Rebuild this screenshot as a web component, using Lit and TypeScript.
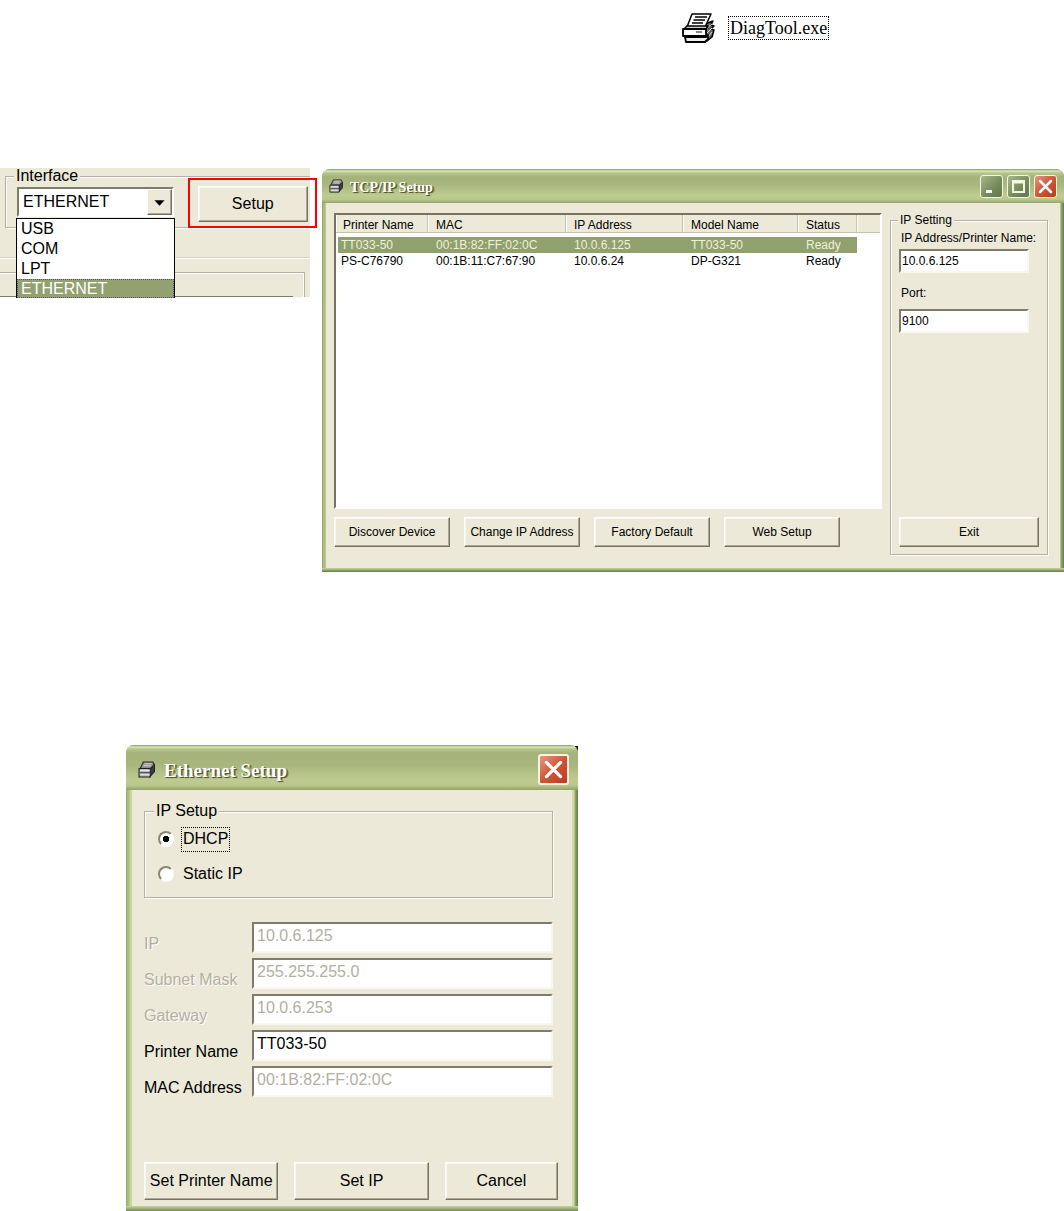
import { LitElement, html, css, svg } from "lit";
import { customElement, property, state } from "lit/decorators.js";
import { classMap } from "lit/directives/class-map.js";

const controls = css`
  * {
    box-sizing: border-box;
  }
  button.classic {
    margin: 0;
    padding: 0;
    border: 1px solid;
    border-color: #fff #77735f #77735f #fff;
    box-shadow: inset -1px -1px 0 #aca899, inset 1px 1px 0 #f8f7f0;
    background: #ece9d8;
    color: #000;
    font: inherit;
    white-space: nowrap;
    overflow: hidden;
  }
  .field {
    display: block;
    width: 100%;
    margin: 0;
    border: 2px solid;
    border-color: #807c69 #f8f7f0 #f8f7f0 #807c69;
    border-radius: 0;
    background: #fff;
    color: #000;
    font: inherit;
    outline: none;
  }
  fieldset {
    margin: 0;
    min-width: 0;
    border: 1px solid #b5b2a2;
    box-shadow: 1px 1px 0 #fff, inset 1px 1px 0 #fff;
  }
  legend {
    padding: 0 2px;
    background: #ece9d8;
  }
`;

const smallPrinter = svg`
  <path d="M5 1 H14 L15.500 4 L12 7 H2 Z" fill="#8c8c8c" stroke="#2b2b2b" />
  <path d="M11 8 L15.500 3.500 V10 L11 15 Z" fill="#3c3c3c" stroke="#222" />
  <path d="M1 7 H11.500 V15 H1 Z" fill="#b4b4b4" stroke="#222" />
  <path d="M2 9 H11 M2 13 H11" stroke="#eee" />
  <path d="M2 11 H11" stroke="#444" />
  <path d="M6 2.500 H13 M5 4.500 H12" stroke="#d8d8d8" />
`;

@customElement("xp-window")
class XpWindow extends LitElement {
  @property() heading = "";
  @property({ type: Boolean, reflect: true }) large = false;
  @property({ type: Boolean }) sizable = false;

  static styles = [
    controls,
    css`
      :host {
        display: block;
        position: relative;
      }
      :host([large])::before {
        content: "";
        position: absolute;
        top: 1px;
        right: 0;
        width: 3px;
        height: 5px;
        background: #111;
      }
      .frame {
        position: relative;
        border-radius: 8px 8px 0 0;
        overflow: hidden;
        background: linear-gradient(90deg, #8ca266, #b3c387 2px, #a5bb7b 3px, #c9d69d 4px, #c9d69d 50%, #d0dca4 50%, #d0dca4 calc(100% - 4px), #94ab70 calc(100% - 3px), #5f7b4b);
      }
      .title {
        display: flex;
        align-items: center;
        gap: 7px;
        height: 34px;
        padding: 0 7px;
        background: linear-gradient(180deg, #82955c 0, #dfe7b9 2px, #b7c48c 4px, #a5b37b 8px, #a8b77e 45%, #bfcb90 78%, #b9c68c 90%, #90a36b 100%);
      }
      h2 {
        flex: 1;
        margin: 0;
        padding-top: 3px;
        font: bold 14px "Liberation Serif", serif;
        color: #fff;
        text-shadow: 1px 1px 0 #555b32, 2px 1px 1px #6b7345;
        white-space: nowrap;
      }
      .icon {
        width: 14px;
        height: 14px;
        flex: none;
      }
      .tools {
        display: flex;
        gap: 4px;
      }
      .tool {
        display: block;
        width: 23px;
        height: 23px;
        padding: 0;
        border: 1px solid #f4f6e2;
        border-radius: 3px;
        background: linear-gradient(135deg, #a9b78a, #75895a 60%, #62784a);
      }
      .tool svg {
        display: block;
        width: 100%;
        height: 100%;
      }
      .close {
        background: linear-gradient(135deg, #e39a80, #cf5638 50%, #b83c1c);
      }
      .client {
        margin: 0 4px 4px;
        background: #ece9d8;
      }
      .bottom {
        position: absolute;
        left: 0;
        right: 0;
        bottom: 0;
        height: 4px;
        background: linear-gradient(180deg, #c9d69d, #94ab70 50%, #5f7b4b);
      }
      :host([large]) .title {
        height: 45px;
        gap: 9px;
        padding: 4px 9px 0 12px;
      }
      :host([large]) h2 {
        font-size: 19px;
      }
      :host([large]) .icon {
        width: 17px;
        height: 17px;
      }
      :host([large]) .tool {
        width: 31px;
        height: 31px;
        border-width: 2px;
      }
      :host([large]) .client {
        margin: 0 6px 6px;
      }
      :host([large]) .bottom {
        height: 6px;
      }
    `,
  ];

  render() {
    return html`
      <section class="frame" aria-label=${this.heading}>
        <div class="bottom"></div>
        <header class="title">
          <svg class="icon" viewBox="0 0 16 16" aria-hidden="true">${smallPrinter}</svg>
          <h2>${this.heading}</h2>
          <div class="tools">
            ${this.sizable
              ? html`
                  <button class="tool" aria-label="Minimize">
                    <svg viewBox="0 0 21 21"><path d="M5 15.500 H11" stroke="#fff" stroke-width="3" /></svg>
                  </button>
                  <button class="tool" aria-label="Maximize">
                    <svg viewBox="0 0 21 21"><path d="M5 5 H16 V16 H5 Z M5 6.500 H16" stroke="#f4f6e2" stroke-width="2" fill="none" /></svg>
                  </button>
                `
              : null}
            <button class="tool close" aria-label="Close">
              <svg viewBox="0 0 21 21"><path d="M5 5 L16 16 M16 5 L5 16" stroke="#fff" stroke-width="2.500" stroke-linecap="round" /></svg>
            </button>
          </div>
        </header>
        <div class="client"><slot></slot></div>
      </section>
    `;
  }
}

@customElement("interface-picker")
class InterfacePicker extends LitElement {
  @state() private selected = "ETHERNET";
  private options = ["USB", "COM", "LPT", "ETHERNET"];

  static styles = [
    controls,
    css`
      :host {
        display: block;
        font: 16px/20px "Liberation Sans", Arial, sans-serif;
      }
      .panel {
        display: flex;
        flex-direction: column;
        position: relative;
        background: #ece9d8;
      }
      .group {
        display: grid;
        grid-template-columns: minmax(0, 156fr) minmax(0, 122fr);
        gap: 14px;
        margin-left: 5px;
        padding: 3px 0 10px 11px;
        border-right: 0;
      }
      legend {
        margin-left: -3px;
        line-height: 16px;
      }
      .combo {
        position: relative;
      }
      .box {
        display: flex;
        border: 2px solid;
        border-color: #807c69 #fff #fff #807c69;
      }
      select {
        appearance: none;
        flex: 1;
        min-width: 0;
        height: 26px;
        padding: 0 4px;
        border: 0;
        border-radius: 0;
        background: #fff;
        color: #000;
        font: inherit;
      }
      .arrow {
        display: block;
        width: 25px;
        height: 26px;
        border: 1px solid;
        border-color: #fff #77735f #77735f #fff;
        box-shadow: inset -1px -1px 0 #aca899;
        background: #ece9d8;
        pointer-events: none;
      }
      .list {
        position: absolute;
        z-index: 2;
        top: 31px;
        left: -1px;
        right: -1px;
        margin: 0;
        padding: 0;
        list-style: none;
        border: 1px solid #000;
        border-bottom: 0;
        background: #fff;
      }
      .option {
        height: 20px;
        padding: 0 4px;
      }
      .option:last-child {
        height: 19px;
        overflow: hidden;
      }
      .option.active {
        background: #93a070;
        color: #fff;
        outline: 1px dotted #55506b;
        outline-offset: -1px;
      }
      .callout {
        align-self: start;
        margin: -9px -7px -12px 0;
        padding: 6px 7px 4px 8px;
        border: 2px solid #f00;
        position: relative;
      }
      .callout .classic {
        display: block;
        width: 100%;
        height: 36px;
      }
      .rule {
        height: 2px;
        margin-top: 29px;
        background: linear-gradient(#d5d2c2 50%, #fff 50%);
      }
      .below {
        height: 25px;
        margin: 13px 5px 0 0;
        border: 1px solid #b5b2a2;
        border-width: 1px 1px 0 0;
        box-shadow: inset -1px 1px 0 #fff;
        display: flex;
        align-items: flex-end;
        padding-right: 11px;
      }
      .inner {
        flex: 1;
        height: 1px;
        background: #807c69;
      }
    `,
  ];

  render() {
    return html`
      <div class="panel">
        <fieldset class="group">
          <legend>Interface</legend>
          <div class="combo">
            <div class="box">
              <select aria-label="Interface" @change=${(e: Event) => (this.selected = (e.target as HTMLSelectElement).value)}>
                ${this.options.map((o) => html`<option ?selected=${o === this.selected}>${o}</option>`)}
              </select>
              <svg class="arrow" viewBox="0 0 25 26" aria-hidden="true"><path d="M7 11 H18 L12.500 17 Z" /></svg>
            </div>
            <ul class="list" role="listbox" aria-label="Interface">
              ${this.options.map(
                (o) => html`<li
                  role="option"
                  aria-selected=${o === this.selected}
                  class=${classMap({ option: true, active: o === this.selected })}
                  @click=${() => (this.selected = o)}
                >${o}</li>`
              )}
            </ul>
          </div>
          <div class="callout"><button class="classic">Setup</button></div>
        </fieldset>
        <div class="rule"></div>
        <div class="below"><div class="inner"></div></div>
      </div>
    `;
  }
}

@customElement("tcpip-setup")
class TcpipSetup extends LitElement {
  @state() private current = 0;
  private columns = ["Printer Name", "MAC", "IP Address", "Model Name", "Status"];
  private rows = [
    ["TT033-50", "00:1B:82:FF:02:0C", "10.0.6.125", "TT033-50", "Ready"],
    ["PS-C76790", "00:1B:11:C7:67:90", "10.0.6.24", "DP-G321", "Ready"],
  ];
  private actions = ["Discover Device", "Change IP Address", "Factory Default", "Web Setup"];

  static styles = [
    controls,
    css`
      :host {
        display: block;
        font: 12px/14px "Liberation Sans", Arial, sans-serif;
      }
      .body {
        display: grid;
        grid-template-columns: minmax(0, 548fr) minmax(0, 158fr);
        gap: 8px;
        padding: 10px 12px 13px 8px;
      }
      .main {
        display: flex;
        flex-direction: column;
        gap: 8px;
        padding-bottom: 8px;
      }
      .list {
        min-height: 296px;
        border: 2px solid;
        border-color: #77735f #fff #fff #77735f;
        background: #fff;
      }
      table {
        width: 100%;
        table-layout: fixed;
        border-collapse: separate;
        border-spacing: 0;
      }
      th {
        height: 18px;
        padding: 2px 0 0 8px;
        font-weight: normal;
        text-align: left;
        background: #ece9d8;
        border-right: 1px solid #c5c2b0;
        border-bottom: 1px solid #c5c2b0;
        box-shadow: inset 1px 0 0 #fff;
        white-space: nowrap;
      }
      th:first-child {
        padding-left: 7px;
      }
      th:last-child {
        border-right: 0;
      }
      .c1 { width: 92px; }
      .c2 { width: 138px; }
      .c3 { width: 117px; }
      .c4 { width: 115px; }
      .c5 { width: 59px; }
      tbody::before {
        content: "";
        display: block;
        height: 4px;
      }
      td {
        height: 16px;
        padding: 0 0 0 8px;
        white-space: nowrap;
        background-clip: padding-box;
      }
      td:first-child {
        padding-left: 3px;
        border-left: 2px solid transparent;
      }
      .picked td {
        background-color: #91a06f;
        color: #eff2d4;
      }
      .actions {
        display: grid;
        grid-template-columns: repeat(4, minmax(0, 116px));
        gap: 14px;
      }
      .classic {
        height: 30px;
      }
      .side {
        display: flex;
        flex-direction: column;
        padding: 4px 8px 7px;
      }
      legend {
        margin-left: -1px;
      }
      label {
        padding-left: 2px;
        white-space: nowrap;
      }
      .field {
        width: 93%;
        height: 24px;
        margin: 4px 0 13px;
        padding: 0 1px;
      }
      .port {
        margin-top: 9px;
      }
      .side .classic {
        margin-top: auto;
      }
    `,
  ];

  render() {
    return html`
      <xp-window heading="TCP/IP Setup" sizable>
        <div class="body">
          <div class="main">
            <div class="list">
              <table>
                <colgroup>
                  <col class="c1" /><col class="c2" /><col class="c3" /><col class="c4" /><col class="c5" /><col />
                </colgroup>
                <thead>
                  <tr>${this.columns.map((c) => html`<th scope="col">${c}</th>`)}<th></th></tr>
                </thead>
                <tbody>
                  ${this.rows.map(
                    (r, i) => html`<tr class=${classMap({ picked: i === this.current })} @click=${() => (this.current = i)}>
                      ${r.map((v) => html`<td>${v}</td>`)}
                    </tr>`
                  )}
                </tbody>
              </table>
            </div>
            <div class="actions">${this.actions.map((a) => html`<button class="classic">${a}</button>`)}</div>
          </div>
          <fieldset class="side">
            <legend>IP Setting</legend>
            <label for="address">IP Address/Printer Name:</label>
            <input class="field" id="address" value="10.0.6.125" />
            <label for="port">Port:</label>
            <input class="field port" id="port" value="9100" />
            <button class="classic">Exit</button>
          </fieldset>
        </div>
      </xp-window>
    `;
  }
}

@customElement("ethernet-setup")
class EthernetSetup extends LitElement {
  private fields = [
    { id: "ip", label: "IP", value: "10.0.6.125", disabled: true, dim: true },
    { id: "mask", label: "Subnet Mask", value: "255.255.255.0", disabled: true, dim: true },
    { id: "gateway", label: "Gateway", value: "10.0.6.253", disabled: true, dim: true },
    { id: "name", label: "Printer Name", value: "TT033-50", disabled: false, dim: false },
    { id: "mac", label: "MAC Address", value: "00:1B:82:FF:02:0C", disabled: true, dim: false },
  ];

  static styles = [
    controls,
    css`
      :host {
        display: block;
        font: 16px/18px "Liberation Sans", Arial, sans-serif;
      }
      .body {
        display: flex;
        flex-direction: column;
        padding: 12px 19px 6px 12px;
      }
      .modes {
        display: flex;
        flex-direction: column;
        gap: 11px;
        padding: 7px 13px 11px;
      }
      legend {
        margin-left: -4px;
      }
      .mode {
        display: flex;
        align-items: center;
        gap: 8px;
        height: 24px;
      }
      .mode input {
        appearance: none;
        width: 16px;
        height: 16px;
        margin: 0;
        border: 2px solid;
        border-color: #8a8672 #fff #fff #8a8672;
        border-radius: 50%;
        background: #fff;
      }
      .mode input:checked {
        background: radial-gradient(circle, #000 3px, #fff 3px);
      }
      .caption {
        padding: 2px 1px 3px;
      }
      .mode input:checked + .caption {
        outline: 1px dotted #000;
      }
      .fields {
        display: grid;
        grid-template-columns: 108px minmax(0, 1fr);
        row-gap: 5px;
        margin-top: 24px;
      }
      .fields label {
        align-self: end;
        line-height: 18px;
        white-space: nowrap;
      }
      .dim {
        color: #b3af9f;
        text-shadow: 1px 1px 0 #fff;
      }
      .field {
        height: 31px;
        padding: 0 3px 3px;
      }
      .field:disabled {
        color: #b3af9f;
      }
      .actions {
        display: grid;
        grid-template-columns: minmax(0, 134fr) minmax(0, 134fr) minmax(0, 113fr);
        gap: 16px;
        margin: 65px -5px 0 0;
      }
      .classic {
        height: 38px;
      }
    `,
  ];

  render() {
    return html`
      <xp-window heading="Ethernet Setup" large>
        <div class="body">
          <fieldset class="modes">
            <legend>IP Setup</legend>
            <label class="mode"><input type="radio" name="mode" checked /><span class="caption">DHCP</span></label>
            <label class="mode"><input type="radio" name="mode" /><span class="caption">Static IP</span></label>
          </fieldset>
          <div class="fields">
            ${this.fields.map(
              (f) => html`
                <label for=${f.id} class=${classMap({ dim: f.dim })}>${f.label}</label>
                <input class="field" id=${f.id} .value=${f.value} ?disabled=${f.disabled} />
              `
            )}
          </div>
          <div class="actions">
            <button class="classic">Set Printer Name</button>
            <button class="classic">Set IP</button>
            <button class="classic">Cancel</button>
          </div>
        </div>
      </xp-window>
    `;
  }
}

@customElement("app-root")
class AppRoot extends LitElement {
  static styles = css`
    * {
      box-sizing: border-box;
    }
    :host {
      display: block;
      background: #fff;
      color: #000;
    }
    .file {
      display: flex;
      align-items: center;
      gap: 14px;
      padding: 12px 0 124px 64%;
    }
    .file svg {
      flex: none;
      width: 34px;
      height: 32px;
    }
    .file a {
      padding: 0 1px;
      outline: 1px dotted #000;
      outline-offset: 0;
      color: #000;
      text-decoration: none;
      font: 18px/22px "Liberation Serif", serif;
    }
    .row {
      display: grid;
      grid-template-columns: minmax(0, 310fr) minmax(0, 742fr);
      gap: 12px;
      align-items: start;
    }
    tcpip-setup {
      margin-top: 1px;
    }
    ethernet-setup {
      max-width: 452px;
      margin: 173px 0 0 126px;
    }
  `;

  render() {
    return html`
      <main>
        <div class="file">
          <svg viewBox="0 0 34 32" aria-hidden="true" stroke-linejoin="round">
            <path d="M24 12 L32 9 L30 13 L33 14 L30 17 L33 18 L31 25 L26 29 Z" fill="#666" stroke="#000" stroke-width="1.500" />
            <path d="M25 17 L31 12 M26 21 L31 16 M27 25 L31 20" stroke="#ddd" />
            <path d="M11 2 H30 L24 15 H6 Z" fill="#fff" stroke="#000" stroke-width="1.500" />
            <path d="M14 5 H26 M12.500 8 H24 M11 11 H22" stroke="#000" stroke-width="1.500" />
            <path d="M3 17 L6 14 H27 L25 17 Z" fill="#ccc" stroke="#000" stroke-width="1.500" />
            <path d="M2 17 H25 V24 H2 Z" fill="#fff" stroke="#000" stroke-width="1.800" />
            <path d="M15 20 H21" stroke="#888" stroke-width="2" />
            <path d="M4 25 H25 L27 23 V27 L24 30 H5 Z" fill="#eee" stroke="#000" stroke-width="1.800" />
          </svg>
          <a href="#DiagTool.exe">DiagTool.exe</a>
        </div>
        <div class="row">
          <interface-picker></interface-picker>
          <tcpip-setup></tcpip-setup>
        </div>
        <ethernet-setup></ethernet-setup>
      </main>
    `;
  }
}
